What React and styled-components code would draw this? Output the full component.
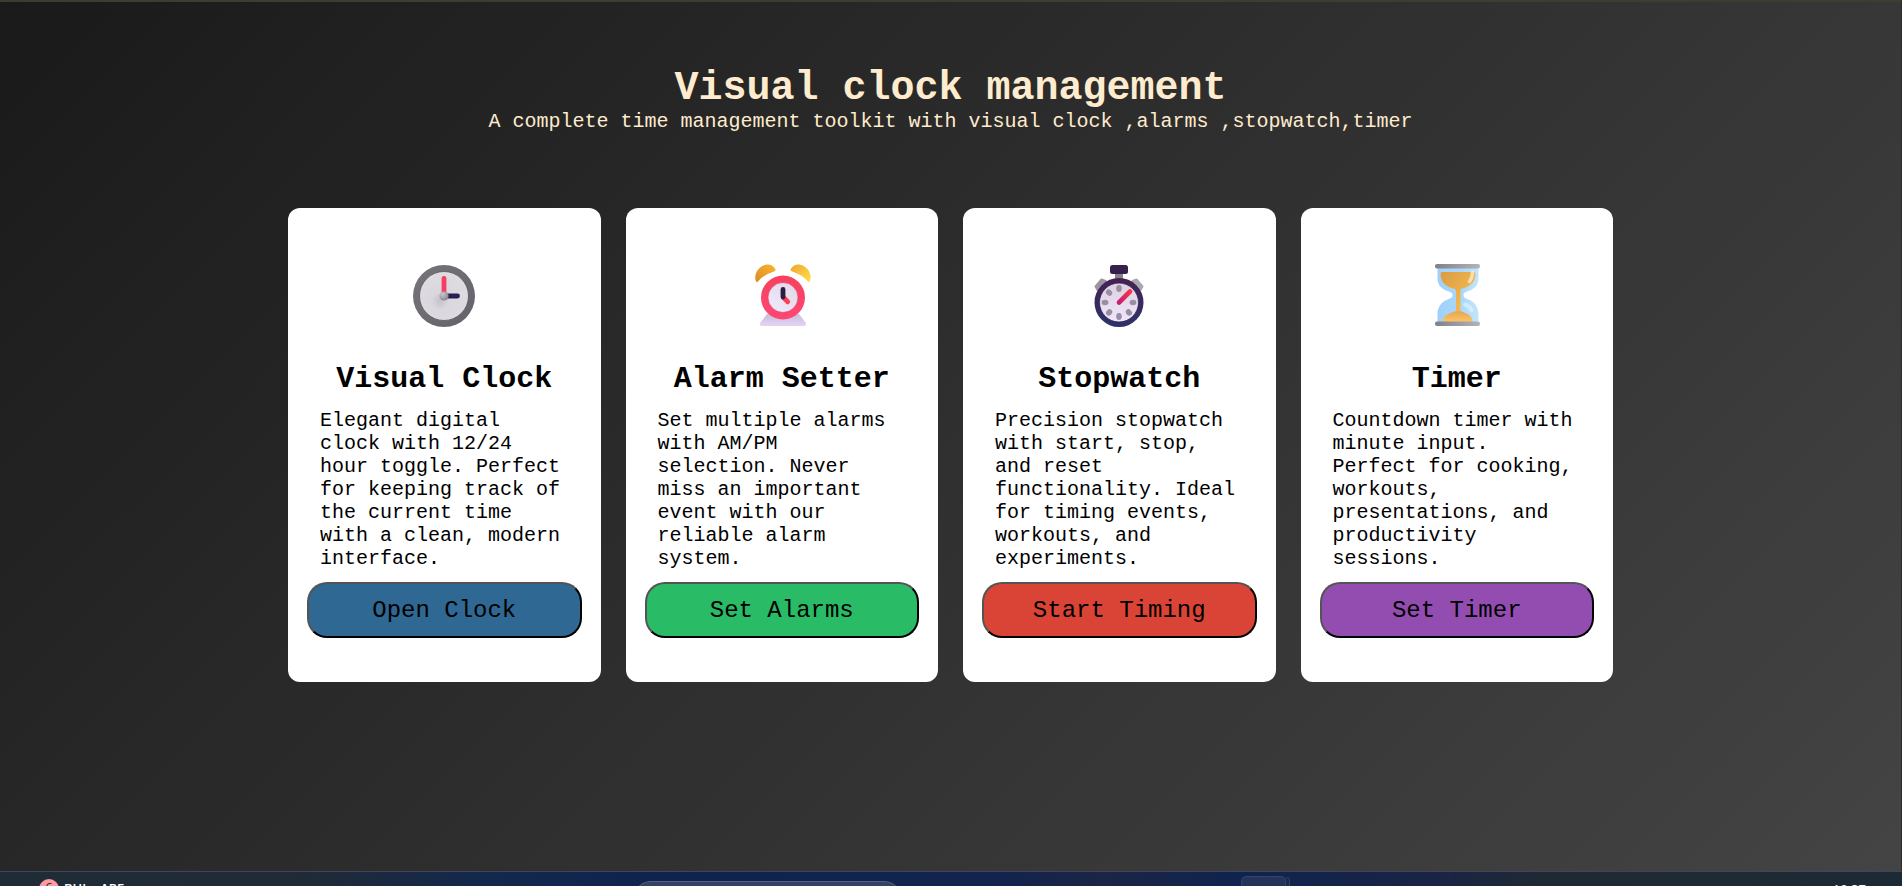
import React from "react";
import styled, { createGlobalStyle } from "styled-components";

const GlobalStyle = createGlobalStyle`
  *, *::before, *::after { box-sizing: border-box; }
  body { margin: 0; background: #2d2d2d; }
  h1, h2, p { margin: 0; }
`;

const Shell = styled.div`
  min-height: 100vh;
  display: flex;
  flex-direction: column;
`;

const Page = styled.div`
  flex: 1;
  border-top: 2px solid #3a4030;
  border-right: 1px solid #2c2c2c;
  background: linear-gradient(135deg, #1a1a1a, #444444);
  font-family: "Courier New", "Liberation Mono", monospace;
`;

const Header = styled.header`
  padding: 65px 24px 0;
  text-align: center;
  color: #ffebcd;
`;

const Title = styled.h1`
  font-size: 40px;
  line-height: 43px;
`;

const Subtitle = styled.p`
  font-size: 20px;
  line-height: 23px;
`;

const Tools = styled.main`
  width: 100%;
  max-width: 1325px;
  margin: 0 auto;
  padding: 75px 0 40px;
  display: grid;
  grid-template-columns: repeat(auto-fit, minmax(288px, 1fr));
  gap: 25px;
  align-items: start;
`;

const Card = styled.article`
  display: flex;
  flex-direction: column;
  padding: 56px 19px 44px;
  border-radius: 12px;
  background: #fff;
  color: #000;
`;

const Picture = styled.svg`
  width: 64px;
  height: 64px;
  align-self: center;
`;

const CardTitle = styled.h2`
  margin-top: 34px;
  font-size: 30px;
  line-height: 34px;
  text-align: center;
`;

const Description = styled.p`
  margin: 13px 13px 12px;
  font-size: 20px;
  line-height: 23px;
`;

const Action = styled.button`
  padding: 13px 12px 11px;
  border: 2px outset #000;
  border-radius: 20px;
  background: ${(p) => p.$color};
  color: #000;
  font-family: inherit;
  font-size: 24px;
  line-height: 28px;
  cursor: pointer;
`;

const Taskbar = styled.footer`
  height: 15px;
  overflow: hidden;
  display: grid;
  grid-template-columns: 1fr auto 1fr;
  align-items: start;
  padding: 0 36px 0 39px;
  border-top: 1px solid #3d4856;
  background: linear-gradient(90deg, #1f2c38, #202a36 16%, #14284c 25%, #10234f 34%, #12234f 52%, #1b2545 58%, #10234f 65%, #1a2444 76%, #1f2933 81%, #1c2a35);
  color: #fff;
  font-family: "Open Sans", "Noto Sans", sans-serif;
  font-size: 13px;
  line-height: 16px;
`;

const Widget = styled.div`
  display: flex;
  gap: 5px;
  padding-top: 7px;
`;

const Badge = styled.span`
  width: 20px;
  height: 20px;
  border-radius: 50%;
  background: #ff99a4;
  color: #222;
  text-align: center;
`;

const WidgetLabel = styled.span`
  padding-top: 1px;
  font-weight: 600;
`;

const Dock = styled.div`
  display: flex;
  gap: 339px;
  align-items: flex-start;
  margin-left: 14px;
`;

const SearchField = styled.input`
  width: 269px;
  height: 36px;
  margin-top: 9px;
  border: 1px solid #536080;
  border-radius: 18px;
  background: #34426a;
`;

const AppTile = styled.span`
  width: 45px;
  height: 44px;
  margin-top: 4px;
  border: 1px solid #34436a;
  border-radius: 5px;
  background: #243459;
  box-shadow: 4px 0 0 -1px #172a50, 5px 0 0 -1px #34436a;
`;

const Time = styled.time`
  justify-self: end;
  padding-top: 9px;
`;

function ClockIcon() {
  return (
    <Picture viewBox="0 0 64 64" aria-hidden="true">
      <defs>
        <linearGradient id="rim" x1="0" y1="0" x2="1" y2="1">
          <stop offset="0" stopColor="#77757b" />
          <stop offset="1" stopColor="#646168" />
        </linearGradient>
        <radialGradient id="face" cx="0.42" cy="0.6" r="0.6">
          <stop offset="0" stopColor="#c6c2ca" />
          <stop offset="0.3" stopColor="#dad7de" />
          <stop offset="1" stopColor="#dedce1" />
        </radialGradient>
        <radialGradient id="hub" cx="0.35" cy="0.3" r="0.7">
          <stop offset="0" stopColor="#c9c6cd" />
          <stop offset="1" stopColor="#8b8791" />
        </radialGradient>
      </defs>
      <circle cx="32" cy="32" r="31" fill="url(#rim)" />
      <circle cx="32" cy="32" r="24.5" fill="url(#face)" stroke="#59565e" strokeWidth="0.8" />
      <path d="M32 14.500V30" stroke="#f43f62" strokeWidth="4.800" strokeLinecap="round" />
      <path d="M33 32h12.500" stroke="#2c1e4e" strokeWidth="4.800" strokeLinecap="round" />
      <circle cx="32" cy="32" r="4.600" fill="url(#hub)" />
    </Picture>
  );
}

function AlarmIcon() {
  return (
    <Picture viewBox="0 0 64 64" aria-hidden="true">
      <defs>
        <linearGradient id="bellLeft" x1="0" y1="1" x2="1" y2="0">
          <stop offset="0" stopColor="#dc8a25" />
          <stop offset="1" stopColor="#fbb52d" />
        </linearGradient>
        <linearGradient id="bellRight" x1="0" y1="0" x2="1" y2="1">
          <stop offset="0" stopColor="#efa52f" />
          <stop offset="1" stopColor="#ffe04d" />
        </linearGradient>
        <linearGradient id="ring" x1="0" y1="0" x2="0" y2="1">
          <stop offset="0" stopColor="#f7415d" />
          <stop offset="1" stopColor="#ff4775" />
        </linearGradient>
        <linearGradient id="dial" x1="1" y1="0" x2="0" y2="1">
          <stop offset="0" stopColor="#e3d6e5" />
          <stop offset="1" stopColor="#f0eaff" />
        </linearGradient>
        <linearGradient id="stand" x1="0" y1="0" x2="0" y2="1">
          <stop offset="0" stopColor="#c9bdd6" />
          <stop offset="1" stopColor="#e2d4f8" />
        </linearGradient>
      </defs>
      <path d="M17 50h32l6.500 8.500q2 3.500-2 3.500h-41q-4 0-2-3.500z" fill="url(#stand)" />
      <path d="M6 17.500C3 9 10 .5 18 .5q4 0 7 4c1 1.500.5 2-1 3C18 9.500 12 12.500 8.500 17q-1.500 1.500-2.500.5z" fill="url(#bellLeft)" />
      <path d="M60 17.500C63 9 56 .5 48 .5q-4 0-7 4c-1 1.500-.5 2 1 3 6 2 12 5 15.500 9.500q1.500 1.500 2.500.5z" fill="url(#bellRight)" />
      <circle cx="33" cy="33.500" r="22" fill="url(#ring)" />
      <circle cx="33" cy="33.500" r="15" fill="url(#dial)" stroke="#df3558" strokeWidth="0.6" />
      <path d="M33.500 33.500l4.200 4.200" stroke="#fa3f59" strokeWidth="4.800" strokeLinecap="round" />
      <path d="M33 25.500V33" stroke="#2c1d44" strokeWidth="4.800" strokeLinecap="round" />
    </Picture>
  );
}

function StopwatchIcon() {
  return (
    <Picture viewBox="0 0 64 64" aria-hidden="true">
      <defs>
        <linearGradient id="watchRim" x1="0" y1="0" x2="0" y2="1">
          <stop offset="0" stopColor="#482052" />
          <stop offset="1" stopColor="#2c326b" />
        </linearGradient>
        <linearGradient id="watchFace" x1="0" y1="0" x2="0" y2="1">
          <stop offset="0" stopColor="#ddd1e2" />
          <stop offset="1" stopColor="#efe7fa" />
        </linearGradient>
        <linearGradient id="pointer" x1="1" y1="0" x2="0" y2="1">
          <stop offset="0" stopColor="#f33549" />
          <stop offset="1" stopColor="#c91d73" />
        </linearGradient>
      </defs>
      <path d="M28 8h8v9h-8z" fill="#858187" />
      <path d="M8.500 22.500l6-7 4 1.500 3 4-9 8-2-3z" fill="#99979e" stroke="#99979e" strokeWidth="2" strokeLinejoin="round" />
      <path d="M55.500 22.500l-6-7-4 1.500-3 4 9 8 2-3z" fill="#aaa8ad" stroke="#aaa8ad" strokeWidth="2" strokeLinejoin="round" />
      <rect x="23" y="1" width="18" height="9" rx="2.500" fill="#38204d" />
      <circle cx="32" cy="38.500" r="24.500" fill="url(#watchRim)" />
      <circle cx="32" cy="38.500" r="19.500" fill="url(#watchFace)" stroke="#2b2149" strokeWidth="0.8" />
      <g fill="#9890a2">
        {[0, 90, 135, 180, 225, 270, 315].map((a) => (
          <ellipse key={a} cx="32" cy="24.500" rx="2.800" ry="3.400" transform={`rotate(${a} 32 38.500)`} />
        ))}
      </g>
      <path d="M32 38.500L43 27.500" stroke="url(#pointer)" strokeWidth="4.600" strokeLinecap="round" />
    </Picture>
  );
}

function HourglassIcon() {
  return (
    <Picture viewBox="0 0 64 64" aria-hidden="true">
      <defs>
        <linearGradient id="cap" x1="0" y1="0" x2="1" y2="0">
          <stop offset="0" stopColor="#818087" />
          <stop offset="1" stopColor="#b5b3b9" />
        </linearGradient>
        <linearGradient id="glass" x1="0" y1="0" x2="1" y2="0">
          <stop offset="0" stopColor="#a0d0fa" />
          <stop offset="0.6" stopColor="#aad9fc" />
          <stop offset="1" stopColor="#c4e5fb" />
        </linearGradient>
        <linearGradient id="sandTop" x1="0" y1="0" x2="1" y2="1">
          <stop offset="0" stopColor="#d99c43" />
          <stop offset="1" stopColor="#ffc358" />
        </linearGradient>
        <linearGradient id="sandBottom" x1="0" y1="0" x2="0" y2="1">
          <stop offset="0" stopColor="#e3a656" />
          <stop offset="1" stopColor="#ffc465" />
        </linearGradient>
      </defs>
      <path d="M12.500 3.500h41V14c0 7-4 11-10 13-4 1.500-5 2-5 4s1 3 5 4.500c6 2.500 10 7.500 10 14.500v8h-41v-8c0-7 4-12 10-14.500 4-1.500 5-2.500 5-4.500s-1-2.500-5-4c-6-2-10-6-10-13z" fill="url(#glass)" />
      <path d="M15.500 10q0-2 2-2h31q2 0 2 2c0 8-6 13-13 14.500-2 .5-2 1.500-2 3V46c0 2 2 2.500 4 3H27c2-.5 4-1 4-3V27.500c0-1.500-.5-2.500-2.500-3C21 23 15.500 18 15.500 10z" fill="url(#sandTop)" />
      <path d="M18 56c1-5 5-6 10-8 2-1 8-1 10 0 5 2 8 3 9.500 8q0 2-2 2H20q-2 0-2-2z" fill="url(#sandBottom)" />
      <path d="M47.500 8.500q0 5-3 9" fill="none" stroke="#fff3d9" strokeWidth="3.500" strokeLinecap="round" opacity="0.7" />
      <path d="M40 40.500q5 1.500 6.500 6" fill="none" stroke="#e8f6ff" strokeWidth="4" strokeLinecap="round" opacity="0.6" />
      <rect x="10" y="0" width="45" height="4.600" rx="2" fill="url(#cap)" />
      <rect x="10" y="57.500" width="45" height="4.600" rx="2" fill="url(#cap)" />
    </Picture>
  );
}

const tools = [
  {
    title: "Visual Clock",
    Icon: ClockIcon,
    text: "Elegant digital clock with 12/24 hour toggle. Perfect for keeping track of the current time with a clean, modern interface.",
    action: "Open Clock",
    color: "#2f6892",
  },
  {
    title: "Alarm Setter",
    Icon: AlarmIcon,
    text: "Set multiple alarms with AM/PM selection. Never miss an important event with our reliable alarm system.",
    action: "Set Alarms",
    color: "#2abb67",
  },
  {
    title: "Stopwatch",
    Icon: StopwatchIcon,
    text: "Precision stopwatch with start, stop, and reset functionality. Ideal for timing events, workouts, and experiments.",
    action: "Start Timing",
    color: "#d94436",
  },
  {
    title: "Timer",
    Icon: HourglassIcon,
    text: "Countdown timer with minute input. Perfect for cooking, workouts, presentations, and productivity sessions.",
    action: "Set Timer",
    color: "#934db1",
  },
];

export default function App() {
  return (
    <Shell>
      <GlobalStyle />
      <Page>
        <Header>
          <Title>Visual clock management</Title>
          <Subtitle>A complete time management toolkit with visual clock ,alarms ,stopwatch,timer</Subtitle>
        </Header>
        <Tools>
          {tools.map(({ title, Icon, text, action, color }) => (
            <Card key={title}>
              <Icon />
              <CardTitle>{title}</CardTitle>
              <Description>{text}</Description>
              <Action type="button" $color={color}>{action}</Action>
            </Card>
          ))}
        </Tools>
      </Page>
      <Taskbar>
        <Widget>
          <Badge>6</Badge>
          <WidgetLabel>BUL - ARE</WidgetLabel>
        </Widget>
        <Dock>
          <SearchField aria-label="Search" />
          <AppTile />
        </Dock>
        <Time>10:37</Time>
      </Taskbar>
    </Shell>
  );
}
